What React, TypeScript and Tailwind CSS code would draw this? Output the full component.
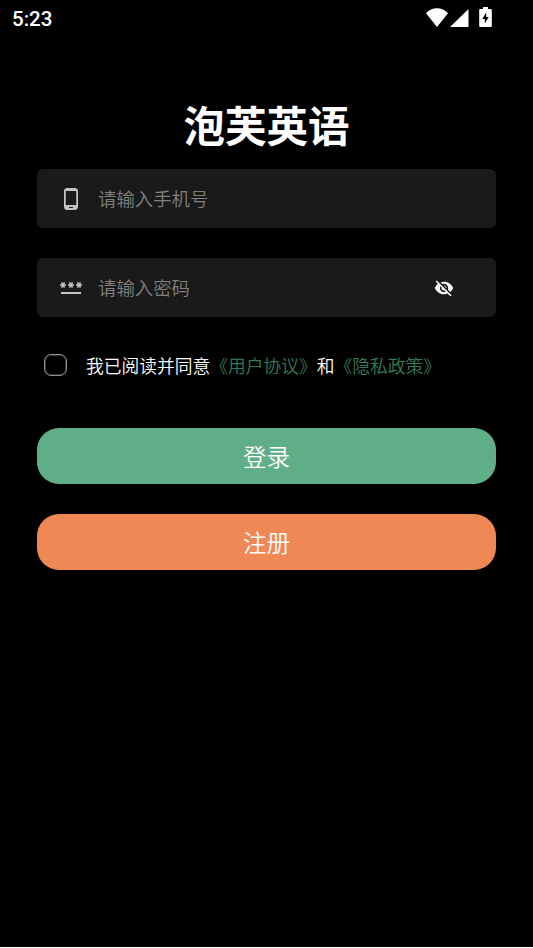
import React, { useState } from 'react';
import { MdPassword, MdPhoneAndroid, MdVisibility, MdVisibilityOff } from "react-icons/md";

const StatusBar: React.FC = () => (
  <div className="flex h-[38px] items-center justify-between pl-3 pr-[41px]">
    <span className="font-['Roboto',sans-serif] text-[20.5px] font-medium leading-none">5:23</span>
    <div className="flex h-5 items-end -mt-[5px]">
      <svg className="h-[19px] w-[22px]" viewBox="0 0 22 19" fill="currentColor">
        <path d="M11 19 0 5.2C3 2 6.800 .3 11 .3s8 1.700 11 4.900z" />
      </svg>
      <svg className="ml-[2px] h-[18px] w-[19px]" viewBox="0 0 19 18" fill="currentColor">
        <path d="M0 18 18.500 0v18z" />
      </svg>
      <svg className="ml-[10px] h-5 w-[13px]" viewBox="0 0 13 20" fill="currentColor">
        <path
          fillRule="evenodd"
          d="M4 0h5v2h2.500c.8 0 1.300.5 1.300 1.300v15.400c0 .8-.5 1.300-1.300 1.300h-10C.7 20 .2 19.500.2 18.700V3.300C.2 2.500.7 2 1.500 2H4zM7.200 5.500 3.300 12h2.500v4.500L9.700 10H7.200z"
        />
      </svg>
    </div>
  </div>
);

interface FieldProps {
  icon: React.ReactNode;
  type: string;
  placeholder: string;
  trailing?: React.ReactNode;
}

const Field: React.FC<FieldProps> = ({ icon, type, placeholder, trailing }) => (
  <label className="flex h-[59px] items-center rounded-md bg-[#1a1a1a] pl-[22px] pr-[42px]">
    <span className="text-[#c4c4c4]">{icon}</span>
    <input
      type={type}
      placeholder={placeholder}
      className="ml-[15px] min-w-0 flex-1 bg-transparent text-[18.4px] font-[350] outline-none placeholder:text-[#808080]"
    />
    {trailing}
  </label>
);

const App: React.FC = () => {
  const [showPassword, setShowPassword] = useState(false);
  const [agreed, setAgreed] = useState(false);

  return (
    <div className="flex h-[948px] w-[533px] flex-col border-b border-white bg-black font-['Noto_Sans_CJK_SC',sans-serif] text-white">
      <StatusBar />

      <main className="flex flex-col px-[37px] pt-[56px]">
        <h1 className="h-[75px] text-center text-[41.5px] font-bold leading-[60px]">泡芙英语</h1>

        <div className="flex flex-col gap-[30px]">
          <Field icon={<MdPhoneAndroid size={24} />} type="tel" placeholder="请输入手机号" />
          <Field
            icon={<MdPassword size={24} className="-mt-px mb-px" />}
            type={showPassword ? 'text' : 'password'}
            placeholder="请输入密码"
            trailing={
              <button type="button" onClick={() => setShowPassword(!showPassword)}>
                {showPassword ? <MdVisibility size={20} /> : <MdVisibilityOff size={20} />}
              </button>
            }
          />
        </div>

        <div className="mt-[37px] flex h-[23px] items-start pl-[7px]">
          <input
            type="checkbox"
            checked={agreed}
            onChange={() => setAgreed(!agreed)}
            className="h-[22px] w-[23px] appearance-none rounded-[7px] border border-[#909090] ring-1 ring-inset ring-[#353535] checked:bg-[#60ae87]"
          />
          <p className="ml-[19px] whitespace-nowrap text-[17.75px] font-[350] leading-[23px]">
            我已阅读并同意<a className="text-[#347a57]">《用户协议》</a>和<a className="text-[#347a57]">《隐私政策》</a>
          </p>
        </div>

        <div className="mt-[51px] flex flex-col gap-[30px] text-[23.5px] font-[350]">
          <button type="button" className="h-14 rounded-[22px] bg-[#60ae87] pt-0.5">登录</button>
          <button type="button" className="h-14 rounded-[22px] bg-[#f08856] pt-0.5">注册</button>
        </div>
      </main>
    </div>
  );
};

export default App;
